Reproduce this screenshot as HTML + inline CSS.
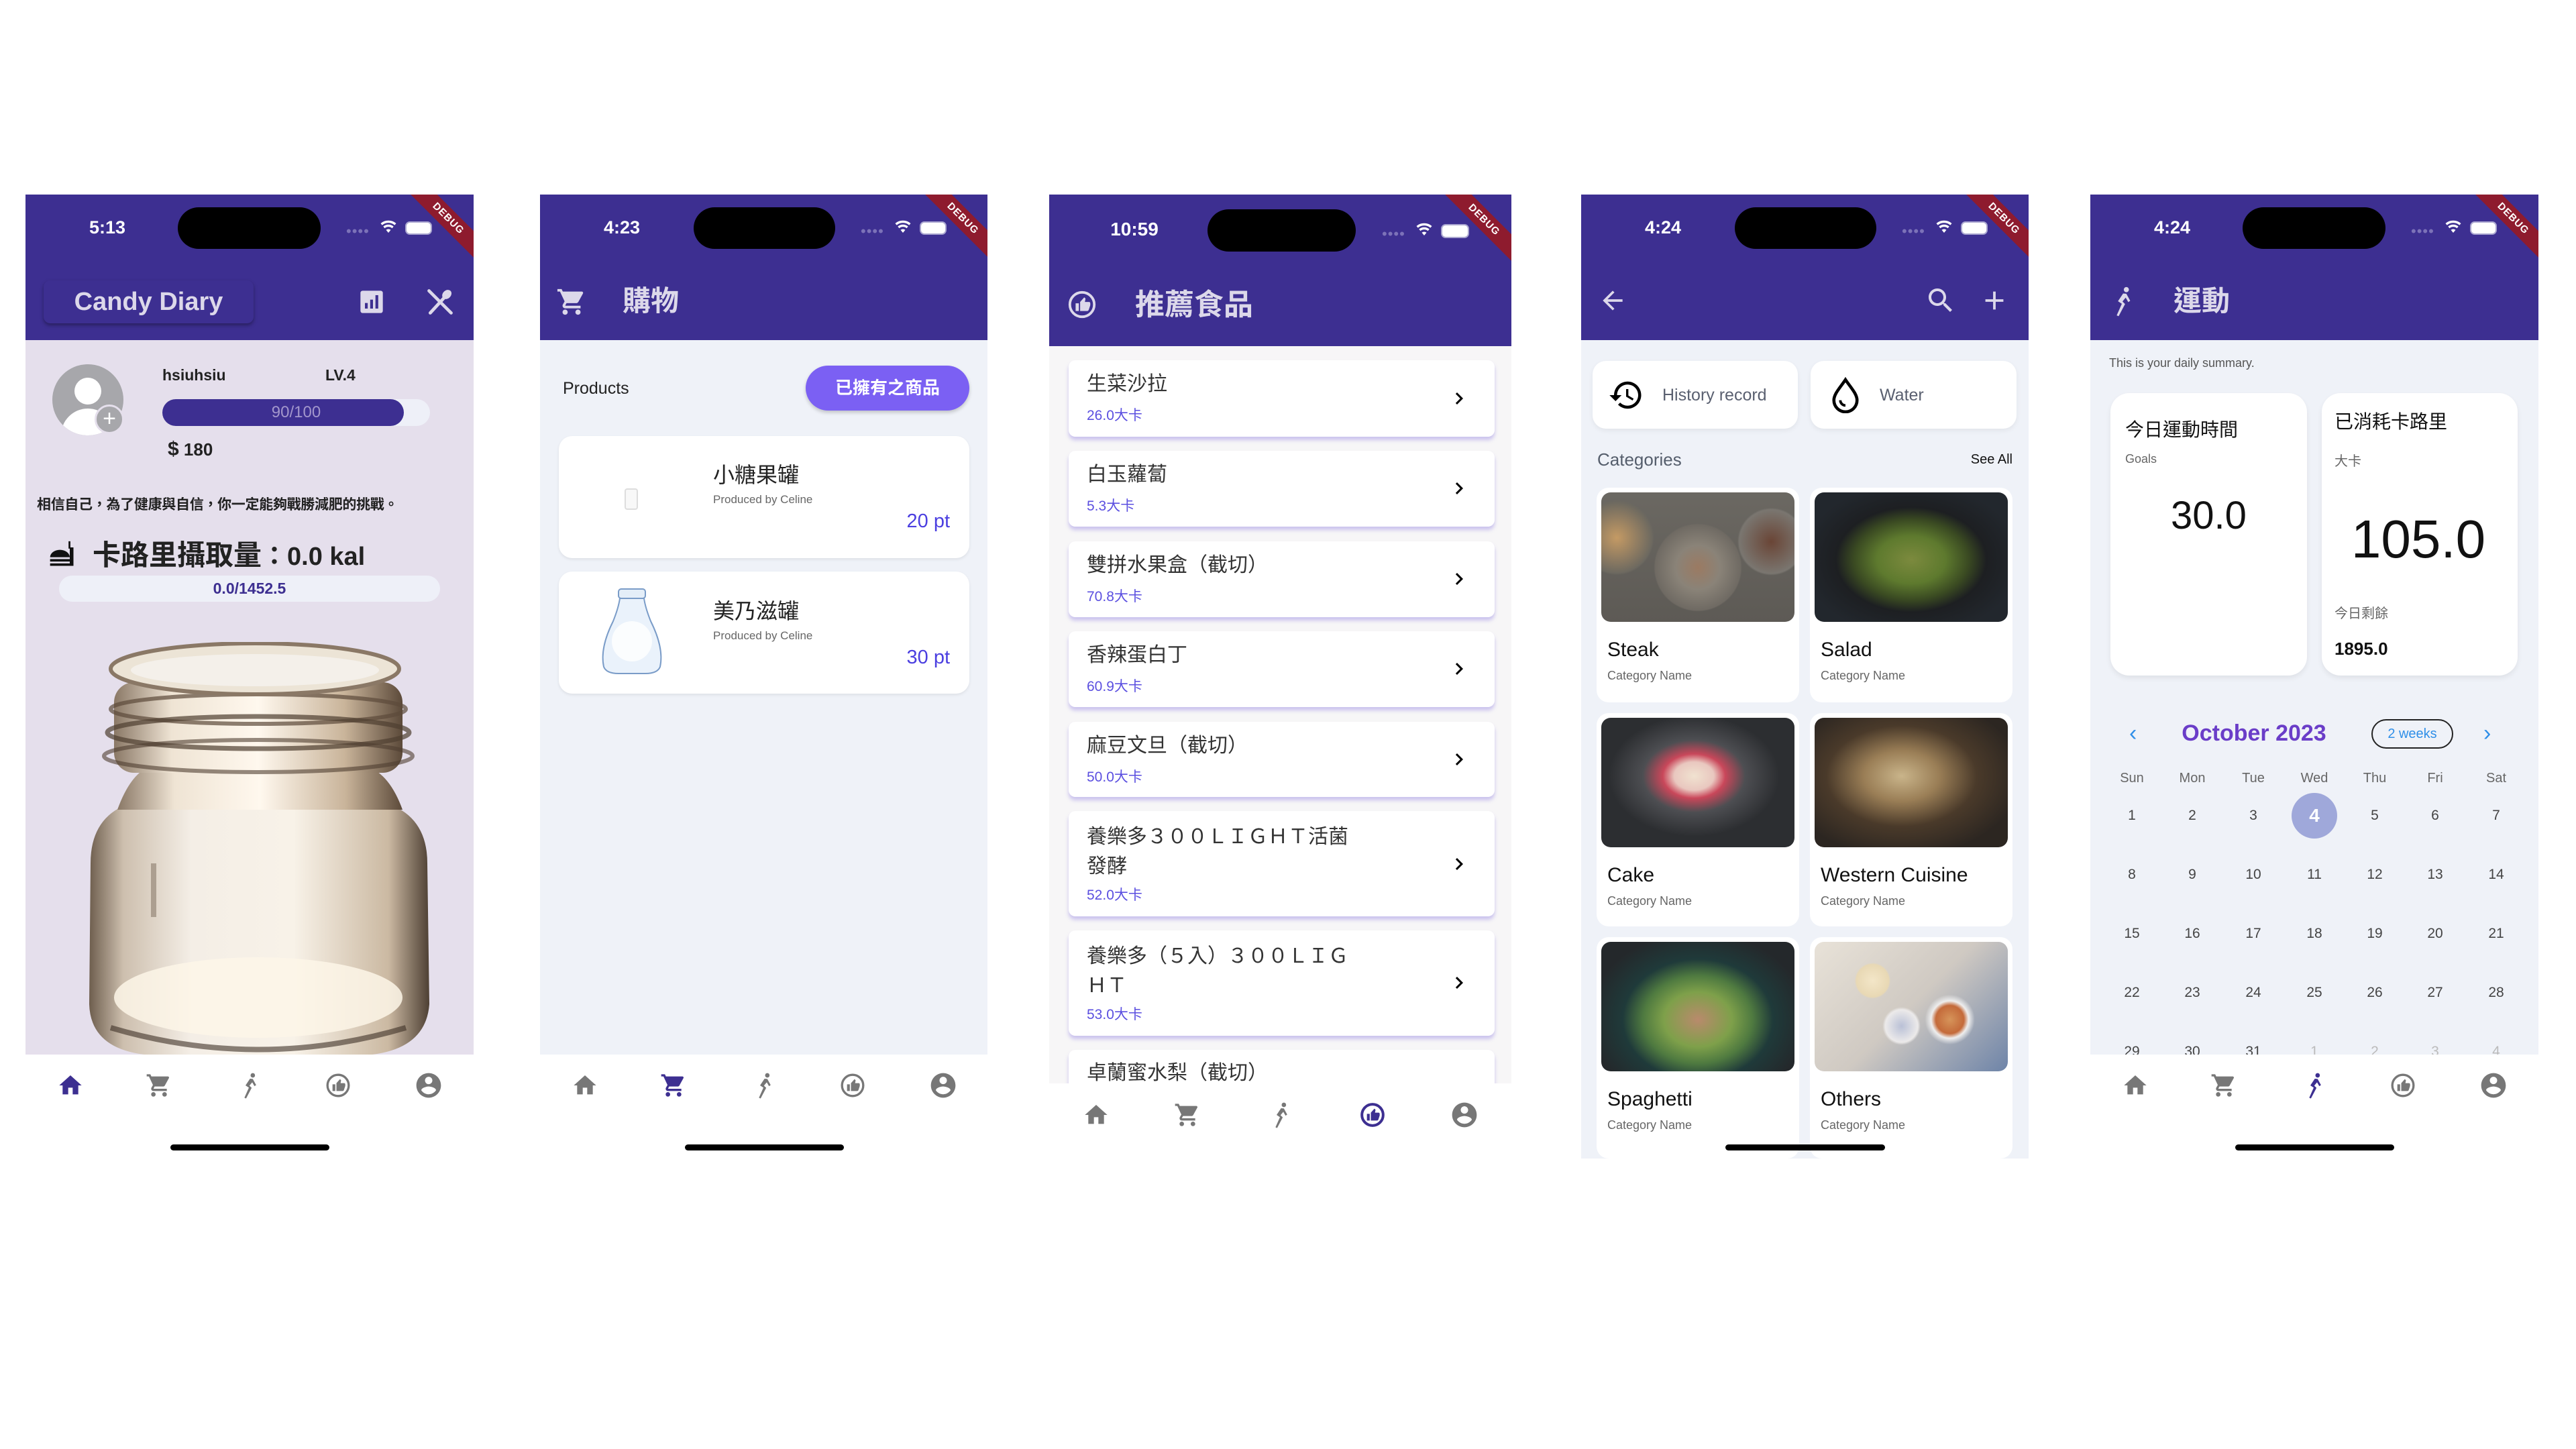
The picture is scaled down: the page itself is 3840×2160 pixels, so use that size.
<!DOCTYPE html>
<html><head><meta charset="utf-8">
<style>
*{margin:0;padding:0;box-sizing:border-box}
body{width:3840px;height:2160px;background:#fff;position:relative;overflow:hidden;font-family:"Liberation Sans","Noto Sans CJK TC",sans-serif;color:#222}
.ph{position:absolute;overflow:hidden;background:#fff}
.a{position:absolute;white-space:nowrap}
.bar{position:absolute;left:0;top:0;width:100%;background:#3d2f91}
.time{position:absolute;width:120px;text-align:center;color:#fff;font-size:27px;font-weight:bold;line-height:30px}
.isl{position:absolute;background:#000;border-radius:32px}
.dots{position:absolute;color:#7c72b8;font-size:22px;letter-spacing:1px;line-height:10px}
.dbg{position:absolute;width:200px;height:28px;background:#8e1b2e;color:#fff;font-size:15px;font-weight:bold;text-align:center;line-height:28px;transform:rotate(45deg);letter-spacing:1px}
.card{position:absolute;background:#fff}
.ind{position:absolute;height:9px;background:#000;border-radius:5px}
svg{position:absolute}
</style></head><body>

<!-- ================= PHONE 1 ================= -->
<div class="ph" style="left:38px;top:290px;width:668px;height:1450px">
  <div class="bar" style="height:217px"></div>
  <div class="time" style="left:62px;top:34px">5:13</div>
  <div class="isl" style="left:227px;top:19px;width:213px;height:62px"></div>
  <div class="dots" style="left:478px;top:50px">••••</div>
  <svg style="left:528px;top:36px" width="26" height="24" viewBox="0 0 24 24"><path fill="#fff" d="M12 21l-3.5-4.2a5.5 5.5 0 017 0zM4.3 11.6a11.8 11.8 0 0115.4 0l-2.2 2.6a8.3 8.3 0 00-11 0zM0.5 7A17.5 17.5 0 0123.5 7l-2.2 2.6a14 14 0 00-18.6 0z"/></svg>
  <div class="a" style="left:566px;top:40px;width:40px;height:20px;border:2px solid #aaa6d0;border-radius:7px;background:#fff"></div>
  <div class="dbg" style="left:530px;top:22px">DEBUG</div>

  <div class="a" style="left:27px;top:128px;width:313px;height:64px;border-radius:10px;background:#3d2f91;box-shadow:0 3px 6px rgba(0,0,0,.35)"></div>
  <div class="a" style="left:27px;top:136px;width:313px;text-align:center;font-size:38px;font-weight:bold;color:#dcd8ea;line-height:48px">Candy Diary</div>
  <svg style="left:496px;top:140px" width="40" height="40" viewBox="0 0 24 24"><rect x="2" y="2" width="20" height="20" rx="2" fill="#dcd8ea"/><rect x="6" y="13" width="2.5" height="5" fill="#3d2f91"/><rect x="10.7" y="10" width="2.5" height="8" fill="#3d2f91"/><rect x="15.4" y="6" width="2.5" height="12" fill="#3d2f91"/></svg>
  <svg style="left:596px;top:138px" width="44" height="44" viewBox="0 0 24 24"><path d="M3 3l18 18" stroke="#dcd8ea" stroke-width="2.6" stroke-linecap="round"/><path d="M4 21L15 9" stroke="#dcd8ea" stroke-width="2.6" stroke-linecap="round"/><ellipse cx="17.5" cy="6" rx="3.3" ry="4.2" transform="rotate(45 17.5 6)" fill="#dcd8ea"/></svg>

  <div class="a" style="left:0;top:217px;width:668px;height:1065px;background:#e5dfec"></div>
  <div class="a" style="left:40px;top:253px;width:106px;height:106px;border-radius:50%;background:#a7a7ab;overflow:hidden">
    <div class="a" style="left:33px;top:20px;width:40px;height:40px;border-radius:50%;background:#fff"></div>
    <div class="a" style="left:13px;top:66px;width:80px;height:60px;border-radius:40px 40px 0 0;background:#fff"></div>
  </div>
  <div class="a" style="left:103px;top:313px;width:44px;height:44px;border-radius:50%;background:#a7a7ab;border:3px solid #e5dfec;color:#fff;font-size:34px;line-height:36px;text-align:center">+</div>
  <div class="a" style="left:204px;top:255px;font-size:23px;font-weight:bold;line-height:28px">hsiuhsiu</div>
  <div class="a" style="left:447px;top:255px;font-size:23px;font-weight:bold;line-height:28px">LV.4</div>
  <div class="a" style="left:204px;top:305px;width:399px;height:40px;border-radius:20px;background:#eef0f8"></div>
  <div class="a" style="left:204px;top:305px;width:360px;height:40px;border-radius:20px;background:#3d2f91"></div>
  <div class="a" style="left:204px;top:305px;width:399px;text-align:center;font-size:24px;line-height:40px;color:#a397cc">90/100</div>
  <div class="a" style="left:212px;top:364px;font-size:26px;font-weight:bold;line-height:32px"><span style="font-size:30px">$</span> 180</div>
  <div class="a" style="left:17px;top:450px;font-size:21px;font-weight:bold;line-height:26px;letter-spacing:-0.3px">相信自己，為了健康與自信，你一定能夠戰勝減肥的挑戰。</div>
  <svg style="left:33px;top:514px" width="44" height="46" viewBox="0 0 24 24"><path d="M2 14a8 6 0 0116 0z" fill="#111"/><rect x="2" y="15.5" width="16" height="2" fill="#111"/><rect x="2" y="19" width="16" height="2" fill="#111"/><rect x="18" y="6" width="3" height="15" fill="#111"/><rect x="17" y="1" width="1.5" height="6" fill="#111"/></svg>
  <div class="a" style="left:100px;top:513px;font-size:42px;font-weight:bold;line-height:50px">卡路里攝取量<span style="font-size:38px">：0.0 kal</span></div>
  <div class="a" style="left:50px;top:568px;width:568px;height:39px;border-radius:20px;background:#eef0f8;text-align:center;font-size:23px;font-weight:bold;line-height:39px;color:#3d2f91">0.0/1452.5</div>

  <svg style="left:87px;top:667px" width="520" height="615" viewBox="0 0 520 615">
    <defs>
      <linearGradient id="jg" x1="0" x2="1">
        <stop offset="0" stop-color="#6e5e4e"/><stop offset=".1" stop-color="#cdbfae"/><stop offset=".3" stop-color="#f4eee6"/><stop offset=".6" stop-color="#f8f2e8"/><stop offset=".88" stop-color="#cbb9a2"/><stop offset="1" stop-color="#4e4034"/>
      </linearGradient>
      <linearGradient id="ng" x1="0" x2="1">
        <stop offset="0" stop-color="#8a7866"/><stop offset=".2" stop-color="#efe4d4"/><stop offset=".5" stop-color="#fff8ee"/><stop offset=".8" stop-color="#c9b49a"/><stop offset="1" stop-color="#5c4a3a"/>
      </linearGradient>
    </defs>
    <path d="M10 330 Q10 260 70 240 L450 240 Q512 260 512 330 L515 540 Q510 605 430 615 L90 615 Q10 605 8 540 Z" fill="url(#jg)"/>
    <path d="M50 250 Q70 195 100 185 L420 185 Q455 195 475 250 Z" fill="url(#ng)"/>
    <rect x="45" y="60" width="430" height="135" rx="30" fill="url(#ng)"/>
    <ellipse cx="260" cy="100" rx="220" ry="22" fill="none" stroke="#5c4a3a" stroke-width="6" opacity=".7"/>
    <ellipse cx="260" cy="135" rx="225" ry="24" fill="none" stroke="#4e3e30" stroke-width="7" opacity=".7"/>
    <ellipse cx="260" cy="170" rx="230" ry="24" fill="none" stroke="#4e3e30" stroke-width="6" opacity=".6"/>
    <ellipse cx="255" cy="40" rx="215" ry="38" fill="#ece4d6" stroke="#8a7866" stroke-width="6"/>
    <ellipse cx="255" cy="42" rx="185" ry="24" fill="#f4f0ea"/>
    <rect x="100" y="330" width="8" height="80" fill="#7a6a5a" opacity=".5"/>
    <ellipse cx="260" cy="530" rx="215" ry="60" fill="#fdf6e8" opacity=".85"/>
    <path d="M40 575 Q260 640 480 575" fill="none" stroke="#3e3026" stroke-width="8" opacity=".6"/>
  </svg>

  <svg style="left:47px;top:1308px" width="40" height="40" viewBox="0 0 24 24"><path fill="#3d2f91" d="M10 20v-6h4v6h5v-8h3L12 3 2 12h3v8z"/></svg>
  <svg style="left:179px;top:1308px" width="40" height="40" viewBox="0 0 24 24"><path fill="#777" d="M7 18c-1.1 0-2 .9-2 2s.9 2 2 2 2-.9 2-2-.9-2-2-2zM1 2v2h2l3.6 7.6-1.35 2.45c-.16.28-.25.61-.25.95 0 1.1.9 2 2 2h12v-2H7.42c-.14 0-.25-.11-.25-.25l.03-.12.9-1.63h7.450c.75 0 1.41-.41 1.75-1.03l3.58-6.49A1 1 0 0020 4H5.21l-.94-2H1zm16 16c-1.1 0-2 .9-2 2s.9 2 2 2 2-.9 2-2-.9-2-2-2z"/></svg>
  <svg style="left:313px;top:1308px" width="40" height="40" viewBox="0 0 24 24"><circle cx="15.5" cy="3" r="2" fill="#777"/><path fill="#777" d="M13 6l-4 6 3 2-4 9 1.5.7 5-9.5-2-2 2.5-3 2 3.5 1.5-1-3-5.5z"/></svg>
  <svg style="left:446px;top:1308px" width="40" height="40" viewBox="0 0 24 24"><circle cx="12" cy="12" r="9.5" fill="none" stroke="#777" stroke-width="2"/><path fill="#777" d="M7 11h2.5v6H7zM10.5 17h5.5c.6 0 1-.4 1.2-.9l1.2-3.6V11c0-.6-.4-1-1-1h-3.2l.5-2.6-1-1L10.5 10z"/></svg>
  <svg style="left:579px;top:1306px" width="44" height="44" viewBox="0 0 24 24"><path fill="#777" d="M12 2C6.48 2 2 6.48 2 12s4.48 10 10 10 10-4.48 10-10S17.52 2 12 2zm0 3c1.66 0 3 1.34 3 3s-1.34 3-3 3-3-1.34-3-3 1.34-3 3-3zm0 14.2c-2.5 0-4.71-1.28-6-3.220.03-1.99 4-3.08 6-3.08 1.99 0 5.97 1.09 6 3.08-1.29 1.94-3.5 3.22-6 3.22z"/></svg>
  <div class="ind" style="left:216px;top:1416px;width:237px"></div>
</div>

<!-- ================= PHONE 2 ================= -->
<div class="ph" style="left:805px;top:290px;width:667px;height:1450px">
  <div class="bar" style="height:217px"></div>
  <div class="time" style="left:62px;top:34px">4:23</div>
  <div class="isl" style="left:229px;top:19px;width:211px;height:62px"></div>
  <div class="dots" style="left:478px;top:50px">••••</div>
  <svg style="left:528px;top:36px" width="26" height="24" viewBox="0 0 24 24"><path fill="#fff" d="M12 21l-3.5-4.2a5.5 5.5 0 017 0zM4.3 11.6a11.8 11.8 0 0115.4 0l-2.2 2.6a8.3 8.3 0 00-11 0zM0.5 7A17.5 17.5 0 0123.5 7l-2.2 2.6a14 14 0 00-18.6 0z"/></svg>
  <div class="a" style="left:566px;top:40px;width:40px;height:20px;border:2px solid #aaa6d0;border-radius:7px;background:#fff"></div>
  <div class="dbg" style="left:530px;top:22px">DEBUG</div>
  <svg style="left:24px;top:137px" width="46" height="46" viewBox="0 0 24 24"><path fill="#dcd8ea" d="M7 18c-1.1 0-2 .9-2 2s.9 2 2 2 2-.9 2-2-.9-2-2-2zM1 2v2h2l3.6 7.6-1.35 2.45c-.16.28-.25.61-.25.95 0 1.1.9 2 2 2h12v-2H7.42c-.14 0-.25-.11-.25-.25l.03-.12.9-1.63h7.45c.75 0 1.41-.41 1.75-1.03l3.58-6.49A1 1 0 0020 4H5.21l-.94-2H1zm16 16c-1.1 0-2 .9-2 2s.9 2 2 2 2-.9 2-2-.9-2-2-2z"/></svg>
  <div class="a" style="left:123px;top:133px;font-size:42px;font-weight:bold;color:#dcd8ea;line-height:52px">購物</div>

  <div class="a" style="left:0;top:217px;width:667px;height:1065px;background:#eff2f8"></div>
  <div class="a" style="left:34px;top:273px;font-size:25px;line-height:32px">Products</div>
  <div class="a" style="left:396px;top:255px;width:244px;height:67px;border-radius:34px;background:#7b60f3;box-shadow:0 3px 6px rgba(0,0,0,.2);color:#fff;font-size:26px;font-weight:bold;text-align:center;line-height:67px">已擁有之商品</div>

  <div class="card" style="left:28px;top:360px;width:612px;height:182px;border-radius:20px;box-shadow:0 2px 5px rgba(0,0,0,.08)"></div>
  <div class="a" style="left:126px;top:438px;width:20px;height:32px;border:2px solid #ddd;border-radius:4px;background:#f8f8f8"></div>
  <div class="a" style="left:258px;top:398px;font-size:32px;line-height:40px;color:#222">小糖果罐</div>
  <div class="a" style="left:258px;top:444px;font-size:17px;line-height:22px;color:#666">Produced by Celine</div>
  <div class="a" style="left:520px;top:470px;width:91px;text-align:right;font-size:29px;line-height:34px;color:#4b3fe0">20 pt</div>

  <div class="card" style="left:28px;top:562px;width:612px;height:182px;border-radius:20px;box-shadow:0 2px 5px rgba(0,0,0,.08)"></div>
  <svg style="left:87px;top:586px" width="100" height="132" viewBox="0 0 100 132"><rect x="30" y="2" width="40" height="14" rx="4" fill="#e4eef8" stroke="#7a9cc8" stroke-width="2"/><path d="M32 16 Q30 30 22 50 Q2 90 8 118 Q12 128 30 128 L70 128 Q88 128 92 118 Q98 90 78 50 Q70 30 68 16 Z" fill="#eaf2fb" stroke="#7a9cc8" stroke-width="2"/><ellipse cx="50" cy="80" rx="30" ry="30" fill="#fff" opacity=".8"/></svg>
  <div class="a" style="left:258px;top:601px;font-size:32px;line-height:40px;color:#222">美乃滋罐</div>
  <div class="a" style="left:258px;top:647px;font-size:17px;line-height:22px;color:#666">Produced by Celine</div>
  <div class="a" style="left:520px;top:673px;width:91px;text-align:right;font-size:29px;line-height:34px;color:#4b3fe0">30 pt</div>

  <svg style="left:47px;top:1308px" width="40" height="40" viewBox="0 0 24 24"><path fill="#777" d="M10 20v-6h4v6h5v-8h3L12 3 2 12h3v8z"/></svg>
  <svg style="left:179px;top:1308px" width="40" height="40" viewBox="0 0 24 24"><path fill="#3d2f91" d="M7 18c-1.1 0-2 .9-2 2s.9 2 2 2 2-.9 2-2-.9-2-2-2zM1 2v2h2l3.6 7.6-1.35 2.45c-.16.28-.25.61-.25.95 0 1.1.9 2 2 2h12v-2H7.42c-.14 0-.25-.11-.25-.25l.03-.12.9-1.63h7.45c.75 0 1.41-.41 1.75-1.03l3.58-6.49A1 1 0 0020 4H5.21l-.94-2H1zm16 16c-1.1 0-2 .9-2 2s.9 2 2 2 2-.9 2-2-.9-2-2-2z"/></svg>
  <svg style="left:313px;top:1308px" width="40" height="40" viewBox="0 0 24 24"><circle cx="15.5" cy="3" r="2" fill="#777"/><path fill="#777" d="M13 6l-4 6 3 2-4 9 1.5.7 5-9.5-2-2 2.5-3 2 3.5 1.5-1-3-5.5z"/></svg>
  <svg style="left:446px;top:1308px" width="40" height="40" viewBox="0 0 24 24"><circle cx="12" cy="12" r="9.5" fill="none" stroke="#777" stroke-width="2"/><path fill="#777" d="M7 11h2.5v6H7zM10.5 17h5.5c.6 0 1-.4 1.2-.9l1.2-3.6V11c0-.6-.4-1-1-1h-3.2l.5-2.6-1-1L10.5 10z"/></svg>
  <svg style="left:579px;top:1306px" width="44" height="44" viewBox="0 0 24 24"><path fill="#777" d="M12 2C6.48 2 2 6.48 2 12s4.48 10 10 10 10-4.48 10-10S17.52 2 12 2zm0 3c1.66 0 3 1.34 3 3s-1.34 3-3 3-3-1.34-3-3 1.34-3 3-3zm0 14.2c-2.5 0-4.71-1.28-6-3.22.03-1.99 4-3.08 6-3.08 1.99 0 5.97 1.09 6 3.08-1.29 1.94-3.5 3.22-6 3.22z"/></svg>
  <div class="ind" style="left:216px;top:1416px;width:237px"></div>
</div>

<!-- ================= PHONE 3 ================= -->
<div class="ph" style="left:1564px;top:290px;width:689px;height:1440px">
  <div class="bar" style="height:226px"></div>
  <div class="time" style="left:67px;top:37px;font-size:28px">10:59</div>
  <div class="isl" style="left:236px;top:22px;width:221px;height:63px"></div>
  <div class="dots" style="left:496px;top:54px">••••</div>
  <svg style="left:546px;top:40px" width="26" height="24" viewBox="0 0 24 24"><path fill="#fff" d="M12 21l-3.5-4.2a5.5 5.5 0 017 0zM4.3 11.6a11.8 11.8 0 0115.4 0l-2.2 2.6a8.3 8.3 0 00-11 0zM0.5 7A17.5 17.5 0 0123.5 7l-2.2 2.6a14 14 0 00-18.6 0z"/></svg>
  <div class="a" style="left:584px;top:44px;width:42px;height:21px;border:2px solid #aaa6d0;border-radius:7px;background:#fff"></div>
  <div class="dbg" style="left:548px;top:24px">DEBUG</div>
  <svg style="left:26px;top:141px" width="46" height="46" viewBox="0 0 24 24"><circle cx="12" cy="12" r="9.5" fill="none" stroke="#dcd8ea" stroke-width="2"/><path fill="#dcd8ea" d="M7 11h2.5v6H7zM10.5 17h5.5c.6 0 1-.4 1.2-.9l1.2-3.6V11c0-.6-.4-1-1-1h-3.2l.5-2.6-1-1L10.5 10z"/></svg>
  <div class="a" style="left:128px;top:138px;font-size:44px;font-weight:bold;color:#dcd8ea;line-height:54px">推薦食品</div>

  <div class="a" style="left:0;top:226px;width:689px;height:1099px;background:#f7f6f7"></div>

  <div class="card" style="left:29px;top:247px;width:635px;height:114px;border-radius:10px;box-shadow:0 5px 6px rgba(120,100,220,.35)"></div>
  <div class="a" style="left:56px;top:265px;font-size:30px;line-height:36px;color:#333">生菜沙拉</div>
  <div class="a" style="left:56px;top:317px;font-size:21px;line-height:26px;color:#5b4fe0">26.0大卡</div>
  <svg style="left:593px;top:286px" width="36" height="36" viewBox="0 0 24 24"><path d="M10 6L8.59 7.41 13.17 12l-4.58 4.59L10 18l6-6z"/></svg>

  <div class="card" style="left:29px;top:382px;width:635px;height:113px;border-radius:10px;box-shadow:0 5px 6px rgba(120,100,220,.35)"></div>
  <div class="a" style="left:56px;top:400px;font-size:30px;line-height:36px;color:#333">白玉蘿蔔</div>
  <div class="a" style="left:56px;top:452px;font-size:21px;line-height:26px;color:#5b4fe0">5.3大卡</div>
  <svg style="left:593px;top:420px" width="36" height="36" viewBox="0 0 24 24"><path d="M10 6L8.59 7.41 13.17 12l-4.58 4.59L10 18l6-6z"/></svg>

  <div class="card" style="left:29px;top:517px;width:635px;height:113px;border-radius:10px;box-shadow:0 5px 6px rgba(120,100,220,.35)"></div>
  <div class="a" style="left:56px;top:535px;font-size:30px;line-height:36px;color:#333">雙拼水果盒（截切）</div>
  <div class="a" style="left:56px;top:587px;font-size:21px;line-height:26px;color:#5b4fe0">70.8大卡</div>
  <svg style="left:593px;top:555px" width="36" height="36" viewBox="0 0 24 24"><path d="M10 6L8.59 7.41 13.17 12l-4.58 4.59L10 18l6-6z"/></svg>

  <div class="card" style="left:29px;top:651px;width:635px;height:113px;border-radius:10px;box-shadow:0 5px 6px rgba(120,100,220,.35)"></div>
  <div class="a" style="left:56px;top:669px;font-size:30px;line-height:36px;color:#333">香辣蛋白丁</div>
  <div class="a" style="left:56px;top:721px;font-size:21px;line-height:26px;color:#5b4fe0">60.9大卡</div>
  <svg style="left:593px;top:689px" width="36" height="36" viewBox="0 0 24 24"><path d="M10 6L8.59 7.41 13.17 12l-4.58 4.59L10 18l6-6z"/></svg>

  <div class="card" style="left:29px;top:786px;width:635px;height:112px;border-radius:10px;box-shadow:0 5px 6px rgba(120,100,220,.35)"></div>
  <div class="a" style="left:56px;top:804px;font-size:30px;line-height:36px;color:#333">麻豆文旦（截切）</div>
  <div class="a" style="left:56px;top:856px;font-size:21px;line-height:26px;color:#5b4fe0">50.0大卡</div>
  <svg style="left:593px;top:824px" width="36" height="36" viewBox="0 0 24 24"><path d="M10 6L8.59 7.41 13.17 12l-4.58 4.59L10 18l6-6z"/></svg>

  <div class="card" style="left:29px;top:919px;width:635px;height:157px;border-radius:10px;box-shadow:0 5px 6px rgba(120,100,220,.35)"></div>
  <div class="a" style="left:56px;top:936px;font-size:30px;line-height:44px;color:#333">養樂多３００ＬＩＧＨＴ活菌<br>發酵</div>
  <div class="a" style="left:56px;top:1032px;font-size:21px;line-height:26px;color:#5b4fe0">52.0大卡</div>
  <svg style="left:593px;top:980px" width="36" height="36" viewBox="0 0 24 24"><path d="M10 6L8.59 7.41 13.17 12l-4.58 4.59L10 18l6-6z"/></svg>

  <div class="card" style="left:29px;top:1097px;width:635px;height:157px;border-radius:10px;box-shadow:0 5px 6px rgba(120,100,220,.35)"></div>
  <div class="a" style="left:56px;top:1114px;font-size:30px;line-height:44px;color:#333">養樂多（５入）３００ＬＩＧ<br>ＨＴ</div>
  <div class="a" style="left:56px;top:1210px;font-size:21px;line-height:26px;color:#5b4fe0">53.0大卡</div>
  <svg style="left:593px;top:1157px" width="36" height="36" viewBox="0 0 24 24"><path d="M10 6L8.59 7.41 13.17 12l-4.58 4.59L10 18l6-6z"/></svg>

  <div class="card" style="left:29px;top:1275px;width:635px;height:120px;border-radius:10px;box-shadow:0 5px 6px rgba(120,100,220,.35)"></div>
  <div class="a" style="left:56px;top:1292px;font-size:30px;line-height:36px;color:#333">卓蘭蜜水梨（截切）</div>

  <div class="a" style="left:0;top:1325px;width:689px;height:115px;background:#fff"></div>
  <svg style="left:50px;top:1352px" width="40" height="40" viewBox="0 0 24 24"><path fill="#777" d="M10 20v-6h4v6h5v-8h3L12 3 2 12h3v8z"/></svg>
  <svg style="left:186px;top:1352px" width="40" height="40" viewBox="0 0 24 24"><path fill="#777" d="M7 18c-1.1 0-2 .9-2 2s.9 2 2 2 2-.9 2-2-.9-2-2-2zM1 2v2h2l3.6 7.6-1.35 2.45c-.16.28-.25.61-.25.95 0 1.1.9 2 2 2h12v-2H7.42c-.14 0-.25-.11-.25-.25l.03-.12.9-1.63h7.45c.75 0 1.41-.41 1.75-1.03l3.58-6.49A1 1 0 0020 4H5.21l-.94-2H1zm16 16c-1.1 0-2 .9-2 2s.9 2 2 2 2-.9 2-2-.9-2-2-2z"/></svg>
  <svg style="left:324px;top:1352px" width="40" height="40" viewBox="0 0 24 24"><circle cx="15.5" cy="3" r="2" fill="#777"/><path fill="#777" d="M13 6l-4 6 3 2-4 9 1.5.7 5-9.5-2-2 2.5-3 2 3.5 1.5-1-3-5.5z"/></svg>
  <svg style="left:462px;top:1352px" width="40" height="40" viewBox="0 0 24 24"><circle cx="12" cy="12" r="9.5" fill="none" stroke="#3d2f91" stroke-width="2.4"/><path fill="#3d2f91" d="M7 11h2.5v6H7zM10.5 17h5.5c.6 0 1-.4 1.2-.9l1.2-3.6V11c0-.6-.4-1-1-1h-3.2l.5-2.6-1-1L10.5 10z"/></svg>
  <svg style="left:597px;top:1350px" width="44" height="44" viewBox="0 0 24 24"><path fill="#777" d="M12 2C6.48 2 2 6.48 2 12s4.48 10 10 10 10-4.48 10-10S17.52 2 12 2zm0 3c1.66 0 3 1.34 3 3s-1.34 3-3 3-3-1.34-3-3 1.34-3 3-3zm0 14.2c-2.5 0-4.71-1.28-6-3.22.03-1.99 4-3.08 6-3.08 1.99 0 5.97 1.09 6 3.08-1.29 1.94-3.5 3.22-6 3.22z"/></svg>
</div>

<!-- ================= PHONE 4 ================= -->
<div class="ph" style="left:2357px;top:290px;width:667px;height:1437px;background:#eff2f8">
  <div class="bar" style="height:217px"></div>
  <div class="time" style="left:62px;top:34px">4:24</div>
  <div class="isl" style="left:229px;top:19px;width:211px;height:62px"></div>
  <div class="dots" style="left:478px;top:50px">••••</div>
  <svg style="left:528px;top:36px" width="26" height="24" viewBox="0 0 24 24"><path fill="#fff" d="M12 21l-3.5-4.2a5.5 5.5 0 017 0zM4.3 11.6a11.8 11.8 0 0115.4 0l-2.2 2.6a8.3 8.3 0 00-11 0zM0.5 7A17.5 17.5 0 0123.5 7l-2.2 2.6a14 14 0 00-18.6 0z"/></svg>
  <div class="a" style="left:566px;top:40px;width:40px;height:20px;border:2px solid #aaa6d0;border-radius:7px;background:#fff"></div>
  <div class="dbg" style="left:530px;top:22px">DEBUG</div>
  <svg style="left:25px;top:136px" width="44" height="44" viewBox="0 0 24 24"><path fill="#dcd8ea" d="M20 11H7.83l5.59-5.59L12 4l-8 8 8 8 1.41-1.41L7.83 13H20v-2z"/></svg>
  <svg style="left:512px;top:134px" width="48" height="48" viewBox="0 0 24 24"><path fill="#dcd8ea" d="M15.5 14h-.79l-.28-.27C15.41 12.59 16 11.11 16 9.5 16 5.91 13.09 3 9.5 3S3 5.91 3 9.5 5.91 16 9.5 16c1.61 0 3.09-.59 4.23-1.57l.27.28v.79l5 4.99L20.49 19l-4.99-5zm-6 0C7.01 14 5 11.99 5 9.5S7.01 5 9.5 5 14 7.01 14 9.5 11.99 14 9.5 14z"/></svg>
  <svg style="left:593px;top:135px" width="46" height="46" viewBox="0 0 24 24"><path fill="#dcd8ea" d="M19 13h-6v6h-2v-6H5v-2h6V5h2v6h6v2z"/></svg>

  <div class="card" style="left:17px;top:248px;width:306px;height:101px;border-radius:20px;box-shadow:0 3px 8px rgba(0,0,0,.06)"></div>
  <svg style="left:40px;top:272px" width="54" height="54" viewBox="0 0 24 24"><path fill="#000" d="M13 3c-4.97 0-9 4.030-9 9H1l3.89 3.89.07.14L9 12H6c0-3.87 3.13-7 7-7s7 3.13 7 7-3.13 7-7 7c-1.93 0-3.68-.79-4.94-2.06l-1.42 1.42C8.27 19.99 10.51 21 13 21c4.97 0 9-4.03 9-9s-4.03-9-9-9zm-1 5v5l4.28 2.54.72-1.21-3.5-2.08V8H12z"/></svg>
  <div class="a" style="left:121px;top:283px;font-size:25px;line-height:32px;color:#5a6070">History record</div>
  <div class="card" style="left:342px;top:248px;width:307px;height:101px;border-radius:20px;box-shadow:0 3px 8px rgba(0,0,0,.06)"></div>
  <svg style="left:371px;top:272px" width="46" height="54" viewBox="0 0 24 28"><path d="M12 2C8 8 3 13 3 18a9 9 0 0018 0c0-5-5-10-9-16z" fill="none" stroke="#000" stroke-width="2.4"/><path d="M8 18a4 4 0 004 4" fill="none" stroke="#000" stroke-width="2"/></svg>
  <div class="a" style="left:445px;top:283px;font-size:25px;line-height:32px;color:#5a6070">Water</div>

  <div class="a" style="left:24px;top:379px;font-size:26px;line-height:32px;color:#555e6c">Categories</div>
  <div class="a" style="left:543px;top:382px;width:100px;text-align:right;font-size:20px;line-height:26px;color:#111">See All</div>

  <div class="card" style="left:23px;top:437px;width:302px;height:320px;border-radius:18px"></div>
  <div class="a" style="left:30px;top:444px;width:288px;height:193px;border-radius:14px;background:radial-gradient(circle at 50% 58%,#9b7a62 0,#8a8378 18%,#6f6a63 35%,transparent 36%),radial-gradient(circle at 8% 35%,#c49a64 0,#6d6960 18%,transparent 19%),radial-gradient(circle at 88% 38%,#6a4536 0,#7a7670 17%,transparent 18%),linear-gradient(#6b6862,#5d5a55)"></div>
  <div class="a" style="left:39px;top:661px;font-size:30px;line-height:36px;color:#111">Steak</div>
  <div class="a" style="left:39px;top:705px;font-size:18px;line-height:24px;color:#666">Category Name</div>
  <div class="card" style="left:341px;top:437px;width:302px;height:320px;border-radius:18px"></div>
  <div class="a" style="left:348px;top:444px;width:288px;height:193px;border-radius:14px;background:radial-gradient(ellipse at 50% 52%,#7c8a3e 0,#5e7a2e 25%,#3a4a22 42%,#1d1f22 55%,#22272d 80%),#22272d"></div>
  <div class="a" style="left:357px;top:661px;font-size:30px;line-height:36px;color:#111">Salad</div>
  <div class="a" style="left:357px;top:705px;font-size:18px;line-height:24px;color:#666">Category Name</div>
  <div class="card" style="left:23px;top:773px;width:302px;height:318px;border-radius:18px"></div>
  <div class="a" style="left:30px;top:780px;width:288px;height:193px;border-radius:14px;background:radial-gradient(ellipse at 48% 45%,#f0e2d0 0,#e9c7bf 14%,#c9475a 22%,#4d4e52 36%,#2c2e31 60%),#2a2b2e"></div>
  <div class="a" style="left:39px;top:997px;font-size:30px;line-height:36px;color:#111">Cake</div>
  <div class="a" style="left:39px;top:1041px;font-size:18px;line-height:24px;color:#666">Category Name</div>
  <div class="card" style="left:341px;top:773px;width:302px;height:318px;border-radius:18px"></div>
  <div class="a" style="left:348px;top:780px;width:288px;height:193px;border-radius:14px;background:radial-gradient(ellipse at 45% 45%,#c9b48a 0,#9a7e56 25%,#4a3a2a 50%,#2c2621 80%),#2c2621"></div>
  <div class="a" style="left:357px;top:997px;font-size:30px;line-height:36px;color:#111">Western Cuisine</div>
  <div class="a" style="left:357px;top:1041px;font-size:18px;line-height:24px;color:#666">Category Name</div>
  <div class="card" style="left:23px;top:1107px;width:302px;height:330px;border-radius:18px"></div>
  <div class="a" style="left:30px;top:1114px;width:288px;height:193px;border-radius:14px;background:radial-gradient(ellipse at 50% 60%,#b98a6c 0,#7ea04a 25%,#4f7a40 40%,#1f3a3a 55%,#24282b 80%),#24282b"></div>
  <div class="a" style="left:39px;top:1331px;font-size:30px;line-height:36px;color:#111">Spaghetti</div>
  <div class="a" style="left:39px;top:1375px;font-size:18px;line-height:24px;color:#666">Category Name</div>
  <div class="card" style="left:341px;top:1107px;width:302px;height:330px;border-radius:18px"></div>
  <div class="a" style="left:348px;top:1114px;width:288px;height:193px;border-radius:14px;background:radial-gradient(circle at 30% 30%,#f3e6c8 0,#e8d8b4 10%,transparent 11%),radial-gradient(circle at 70% 60%,#d6945a 0,#c46a3a 9%,#eee 12%,transparent 16%),radial-gradient(circle at 45% 65%,#b9c0d6 0,#eceaea 12%,transparent 14%),linear-gradient(135deg,#e8e2d8,#cfc9c2 50%,#6e84a8)"></div>
  <div class="a" style="left:357px;top:1331px;font-size:30px;line-height:36px;color:#111">Others</div>
  <div class="a" style="left:357px;top:1375px;font-size:18px;line-height:24px;color:#666">Category Name</div>
  <div class="ind" style="left:215px;top:1416px;width:238px"></div>
</div>

<!-- ================= PHONE 5 ================= -->
<div class="ph" style="left:3116px;top:290px;width:668px;height:1450px">
  <div class="bar" style="height:217px"></div>
  <div class="time" style="left:62px;top:34px">4:24</div>
  <div class="isl" style="left:227px;top:19px;width:213px;height:62px"></div>
  <div class="dots" style="left:478px;top:50px">••••</div>
  <svg style="left:528px;top:36px" width="26" height="24" viewBox="0 0 24 24"><path fill="#fff" d="M12 21l-3.5-4.2a5.5 5.5 0 017 0zM4.3 11.6a11.8 11.8 0 0115.4 0l-2.2 2.6a8.3 8.3 0 00-11 0zM0.5 7A17.5 17.5 0 0123.5 7l-2.2 2.6a14 14 0 00-18.6 0z"/></svg>
  <div class="a" style="left:566px;top:40px;width:40px;height:20px;border:2px solid #aaa6d0;border-radius:7px;background:#fff"></div>
  <div class="dbg" style="left:530px;top:22px">DEBUG</div>
  <svg style="left:24px;top:136px" width="46" height="46" viewBox="0 0 24 24"><circle cx="15.5" cy="3" r="2" fill="#dcd8ea"/><path fill="#dcd8ea" d="M13 6l-4 6 3 2-4 9 1.5.7 5-9.5-2-2 2.5-3 2 3.5 1.5-1-3-5.5z"/></svg>
  <div class="a" style="left:124px;top:133px;font-size:42px;font-weight:bold;color:#dcd8ea;line-height:52px">運動</div>

  <div class="a" style="left:0;top:217px;width:668px;height:1065px;background:#eff2f8"></div>
  <div class="a" style="left:28px;top:240px;font-size:18px;line-height:22px;color:#555">This is your daily summary.</div>

  <div class="card" style="left:30px;top:296px;width:293px;height:421px;border-radius:28px;box-shadow:0 4px 8px rgba(0,0,0,.07)"></div>
  <div class="a" style="left:52px;top:334px;font-size:28px;line-height:34px;color:#111">今日運動時間</div>
  <div class="a" style="left:52px;top:383px;font-size:18px;line-height:22px;color:#666">Goals</div>
  <div class="a" style="left:30px;top:445px;width:293px;text-align:center;font-size:58px;line-height:68px;color:#111">30.0</div>

  <div class="card" style="left:345px;top:296px;width:292px;height:421px;border-radius:28px;box-shadow:0 4px 8px rgba(0,0,0,.07)"></div>
  <div class="a" style="left:364px;top:322px;font-size:28px;line-height:34px;color:#111">已消耗卡路里</div>
  <div class="a" style="left:364px;top:386px;font-size:20px;line-height:24px;color:#666">大卡</div>
  <div class="a" style="left:345px;top:467px;width:288px;text-align:center;font-size:80px;line-height:94px;color:#111">105.0</div>
  <div class="a" style="left:364px;top:613px;font-size:20px;line-height:24px;color:#666">今日剩餘</div>
  <div class="a" style="left:364px;top:662px;font-size:26px;font-weight:bold;line-height:30px;color:#111">1895.0</div>

  <div class="a" style="left:58px;top:783px;font-size:34px;line-height:40px;color:#2f8fe8">‹</div>
  <div class="a" style="left:124px;top:781px;width:240px;text-align:center;font-size:34px;font-weight:bold;line-height:44px;color:#6a3dc8">October 2023</div>
  <div class="a" style="left:419px;top:782px;width:122px;height:44px;border:2px solid #222;border-radius:22px;text-align:center;font-size:20px;line-height:40px;color:#2f8fe8">2 weeks</div>
  <div class="a" style="left:586px;top:783px;font-size:34px;line-height:40px;color:#2f8fe8">›</div>

  <div class="a" style="left:300px;top:892px;width:68px;height:68px;border-radius:50%;background:#9fa8da"></div>

  <div class="a" style="left:0;top:1282px;width:668px;height:170px;background:#fff"></div>
  <svg style="left:47px;top:1308px" width="40" height="40" viewBox="0 0 24 24"><path fill="#777" d="M10 20v-6h4v6h5v-8h3L12 3 2 12h3v8z"/></svg>
  <svg style="left:179px;top:1308px" width="40" height="40" viewBox="0 0 24 24"><path fill="#777" d="M7 18c-1.1 0-2 .9-2 2s.9 2 2 2 2-.9 2-2-.9-2-2-2zM1 2v2h2l3.6 7.6-1.35 2.45c-.16.28-.25.61-.25.95 0 1.1.9 2 2 2h12v-2H7.42c-.14 0-.25-.11-.25-.25l.03-.12.9-1.63h7.45c.75 0 1.41-.41 1.75-1.03l3.58-6.49A1 1 0 0020 4H5.21l-.94-2H1zm16 16c-1.1 0-2 .9-2 2s.9 2 2 2 2-.9 2-2-.9-2-2-2z"/></svg>
  <svg style="left:313px;top:1308px" width="40" height="40" viewBox="0 0 24 24"><circle cx="15.5" cy="3" r="2" fill="#3d2f91"/><path fill="#3d2f91" d="M13 6l-4 6 3 2-4 9 1.5.7 5-9.5-2-2 2.5-3 2 3.5 1.5-1-3-5.5z"/></svg>
  <svg style="left:446px;top:1308px" width="40" height="40" viewBox="0 0 24 24"><circle cx="12" cy="12" r="9.5" fill="none" stroke="#777" stroke-width="2"/><path fill="#777" d="M7 11h2.5v6H7zM10.5 17h5.5c.6 0 1-.4 1.2-.9l1.2-3.6V11c0-.6-.4-1-1-1h-3.2l.5-2.6-1-1L10.5 10z"/></svg>
  <svg style="left:579px;top:1306px" width="44" height="44" viewBox="0 0 24 24"><path fill="#777" d="M12 2C6.48 2 2 6.48 2 12s4.48 10 10 10 10-4.48 10-10S17.52 2 12 2zm0 3c1.66 0 3 1.34 3 3s-1.34 3-3 3-3-1.34-3-3 1.34-3 3-3zm0 14.2c-2.5 0-4.71-1.28-6-3.22.03-1.99 4-3.08 6-3.08 1.99 0 5.97 1.09 6 3.08-1.29 1.94-3.5 3.22-6 3.22z"/></svg>
  <div class="ind" style="left:216px;top:1416px;width:237px"></div>

  <div class="a" style="left:22px;top:858px;width:80px;text-align:center;font-size:20px;line-height:24px;color:#666">Sun</div>
  <div class="a" style="left:112px;top:858px;width:80px;text-align:center;font-size:20px;line-height:24px;color:#666">Mon</div>
  <div class="a" style="left:203px;top:858px;width:80px;text-align:center;font-size:20px;line-height:24px;color:#666">Tue</div>
  <div class="a" style="left:294px;top:858px;width:80px;text-align:center;font-size:20px;line-height:24px;color:#666">Wed</div>
  <div class="a" style="left:384px;top:858px;width:80px;text-align:center;font-size:20px;line-height:24px;color:#666">Thu</div>
  <div class="a" style="left:474px;top:858px;width:80px;text-align:center;font-size:20px;line-height:24px;color:#666">Fri</div>
  <div class="a" style="left:565px;top:858px;width:80px;text-align:center;font-size:20px;line-height:24px;color:#666">Sat</div>

  <div style="position:absolute;left:0;top:0;font-size:21px;line-height:24px;color:#444">
    <div class="a" style="left:22px;top:914px;width:80px;text-align:center">1</div>
    <div class="a" style="left:112px;top:914px;width:80px;text-align:center">2</div>
    <div class="a" style="left:203px;top:914px;width:80px;text-align:center">3</div>
    <div class="a" style="left:294px;top:910px;width:80px;text-align:center;color:#fff;font-weight:bold;font-size:28px;line-height:32px">4</div>
    <div class="a" style="left:384px;top:914px;width:80px;text-align:center">5</div>
    <div class="a" style="left:474px;top:914px;width:80px;text-align:center">6</div>
    <div class="a" style="left:565px;top:914px;width:80px;text-align:center">7</div>
    <div class="a" style="left:22px;top:1002px;width:80px;text-align:center">8</div>
    <div class="a" style="left:112px;top:1002px;width:80px;text-align:center">9</div>
    <div class="a" style="left:203px;top:1002px;width:80px;text-align:center">10</div>
    <div class="a" style="left:294px;top:1002px;width:80px;text-align:center">11</div>
    <div class="a" style="left:384px;top:1002px;width:80px;text-align:center">12</div>
    <div class="a" style="left:474px;top:1002px;width:80px;text-align:center">13</div>
    <div class="a" style="left:565px;top:1002px;width:80px;text-align:center">14</div>
    <div class="a" style="left:22px;top:1090px;width:80px;text-align:center">15</div>
    <div class="a" style="left:112px;top:1090px;width:80px;text-align:center">16</div>
    <div class="a" style="left:203px;top:1090px;width:80px;text-align:center">17</div>
    <div class="a" style="left:294px;top:1090px;width:80px;text-align:center">18</div>
    <div class="a" style="left:384px;top:1090px;width:80px;text-align:center">19</div>
    <div class="a" style="left:474px;top:1090px;width:80px;text-align:center">20</div>
    <div class="a" style="left:565px;top:1090px;width:80px;text-align:center">21</div>
    <div class="a" style="left:22px;top:1178px;width:80px;text-align:center">22</div>
    <div class="a" style="left:112px;top:1178px;width:80px;text-align:center">23</div>
    <div class="a" style="left:203px;top:1178px;width:80px;text-align:center">24</div>
    <div class="a" style="left:294px;top:1178px;width:80px;text-align:center">25</div>
    <div class="a" style="left:384px;top:1178px;width:80px;text-align:center">26</div>
    <div class="a" style="left:474px;top:1178px;width:80px;text-align:center">27</div>
    <div class="a" style="left:565px;top:1178px;width:80px;text-align:center">28</div>
  </div>
  <div class="a" style="left:0;top:1262px;width:668px;height:20px;overflow:hidden;font-size:21px;line-height:24px;color:#444">
    <div class="a" style="left:22px;top:4px;width:80px;text-align:center">29</div>
    <div class="a" style="left:112px;top:4px;width:80px;text-align:center">30</div>
    <div class="a" style="left:203px;top:4px;width:80px;text-align:center">31</div>
    <div class="a" style="left:294px;top:4px;width:80px;text-align:center;color:#bbb">1</div>
    <div class="a" style="left:384px;top:4px;width:80px;text-align:center;color:#bbb">2</div>
    <div class="a" style="left:474px;top:4px;width:80px;text-align:center;color:#bbb">3</div>
    <div class="a" style="left:565px;top:4px;width:80px;text-align:center;color:#bbb">4</div>
  </div>
</div>

</body></html>
